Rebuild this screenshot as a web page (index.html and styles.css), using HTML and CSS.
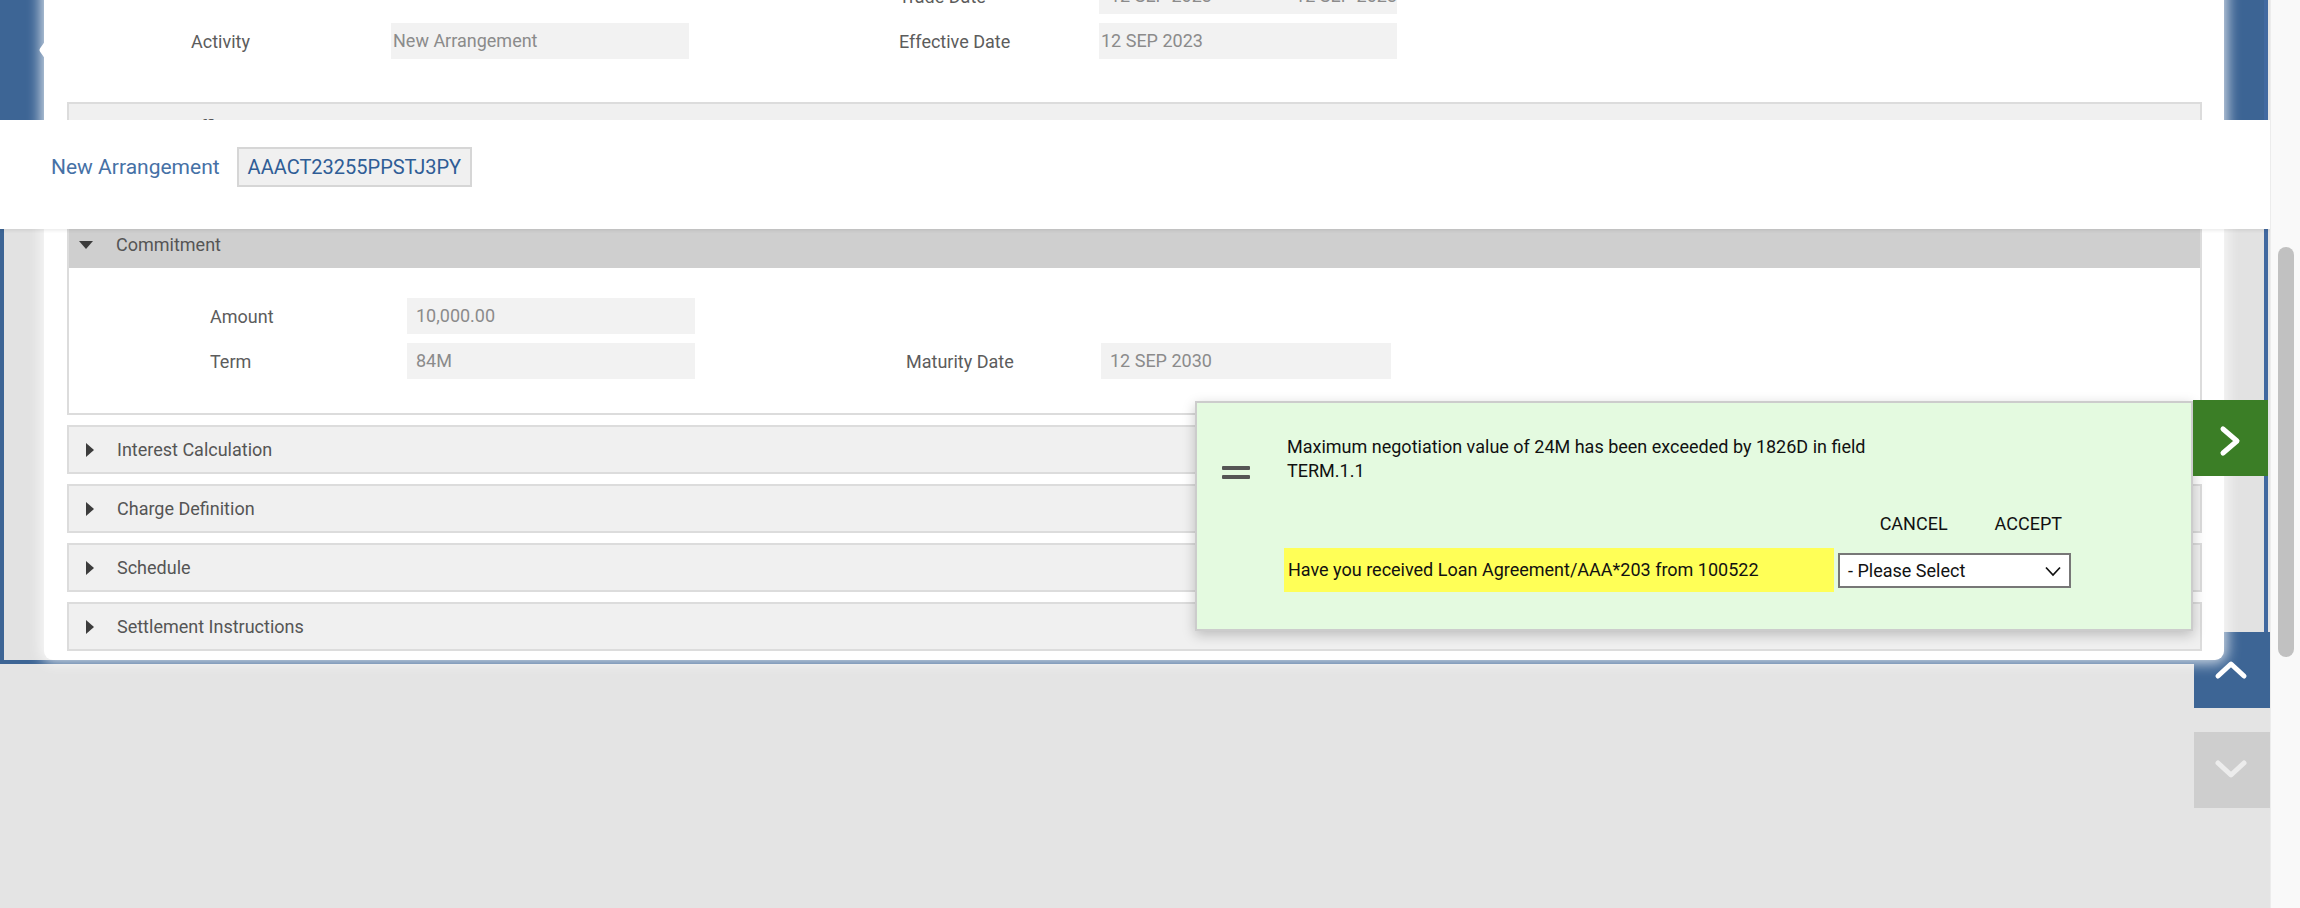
FILE: index.html
```html
<!DOCTYPE html>
<html>
<head>
<meta charset="utf-8">
<title>New Arrangement</title>
<link rel="stylesheet" href="styles.css">
</head>
<body>
<div class="screen">
  <div class="viewport">
    <div class="frame">
      <div class="card">
        <div class="form form-top">
          <span class="label col-4">Trade Date</span>
          <span class="value value-split"><span>12 SEP 2023</span><span>12 SEP 2023</span></span>
          <span class="label">Activity</span>
          <span class="value">New Arrangement</span>
          <span class="label col-4">Effective Date</span>
          <span class="value">12 SEP 2023</span>
        </div>

        <div class="section officer">
          <div class="sec-head"><span class="tri tri-right"></span>Account Officer</div>
        </div>

        <div class="section open">
          <div class="sec-head"><span class="tri tri-down"></span>Commitment</div>
          <div class="form form-commit">
            <span class="label">Amount</span>
            <span class="value">10,000.00</span>
            <span class="label col-1">Term</span>
            <span class="value">84M</span>
            <span class="label col-4">Maturity Date</span>
            <span class="value">12 SEP 2030</span>
          </div>
        </div>

        <div class="section">
          <div class="sec-head"><span class="tri tri-right"></span>Interest Calculation</div>
        </div>
        <div class="section">
          <div class="sec-head"><span class="tri tri-right"></span>Charge Definition</div>
        </div>
        <div class="section">
          <div class="sec-head"><span class="tri tri-right"></span>Schedule</div>
        </div>
        <div class="section last">
          <div class="sec-head"><span class="tri tri-right"></span>Settlement Instructions</div>
        </div>
      </div>
    </div>

    <div class="nav nav-left">
      <svg width="100" height="200" viewBox="0 0 100 200"><path d="M56 40 L42 60 L56 80" fill="none" stroke="#fff" stroke-width="5" stroke-linecap="round" stroke-linejoin="round"/></svg>
    </div>
    <div class="nav nav-right"></div>
    <div class="nav nav-up">
      <svg width="76" height="76" viewBox="0 0 76 76"><path d="M24 44 L37 32 L50 44" fill="none" stroke="#fff" stroke-width="5" stroke-linecap="round" stroke-linejoin="round"/></svg>
    </div>
    <div class="nav nav-down">
      <svg width="76" height="76" viewBox="0 0 76 76"><path d="M24 31 L37 43 L50 31" fill="none" stroke="#ececec" stroke-width="5" stroke-linecap="round" stroke-linejoin="round"/></svg>
    </div>

    <div class="header-bar">
      <span class="header-title">New Arrangement</span>
      <span class="header-id">AAACT23255PPSTJ3PY</span>
    </div>

    <div class="popup">
      <div class="popup-icon"><span></span><span></span></div>
      <div class="popup-body">
        <div class="popup-msg">Maximum negotiation value of 24M has been exceeded by 1826D in field<br>TERM.1.1</div>
        <div class="popup-actions">
          <span class="btn">CANCEL</span>
          <span class="btn">ACCEPT</span>
        </div>
        <div class="popup-question">
          <span class="question">Have you received Loan Agreement/AAA*203 from 100522</span>
          <span class="select">- Please Select
            <svg class="select-arrow" width="16" height="11" viewBox="0 0 16 11"><path d="M1 1.5 L8 9 L15 1.5" fill="none" stroke="#111" stroke-width="1.7"/></svg>
          </span>
        </div>
      </div>
    </div>

    <div class="nav-next">
      <svg width="75" height="76" viewBox="0 0 75 76"><path d="M30 29 L44 41 L30 53" fill="none" stroke="#fff" stroke-width="5" stroke-linecap="round" stroke-linejoin="round"/></svg>
    </div>
  </div>
  <div class="scrollbar"><div class="thumb"></div></div>
</div>
</body>
</html>
```

FILE: styles.css
```css
* { box-sizing: border-box; }

html, body {
  margin: 0;
  padding: 0;
  width: 2300px;
  height: 908px;
  overflow: hidden;
  background: #e4e4e4;
  font-family: Roboto, "Noto Sans", "Liberation Sans", sans-serif;
}

.screen {
  display: flex;
  width: 2300px;
  height: 908px;
}

.viewport {
  position: relative;
  width: 2270px;
  height: 908px;
  overflow: hidden;
  background: #e4e4e4;
}

/* background window */
.frame {
  width: 2268px;
  margin-top: -40px;
  border-left: 4px solid #3d6595;
  border-right: 4px solid #4169a0;
  border-bottom: 4px solid #3d6595;
  padding: 0 40px;
  background: #e2e2e2;
}

.card {
  position: relative;
  z-index: 2;
  background: #ffffff;
  border-radius: 0 0 9px 9px;
  padding: 18px 22px 9px 23px;
  box-shadow: 0 0 14px 3px rgba(255, 255, 255, 0.8);
}

/* forms */
.form {
  display: grid;
  row-gap: 9px;
  align-items: center;
  font-size: 18px;
}

.form-top {
  grid-template-columns: 200px 298px 210px 200px 298px;
  padding-left: 124px;
  margin-bottom: 43px;
}

.form-commit {
  grid-template-columns: 197px 288px 211px 195px 290px;
  padding: 30px 0 34px 141px;
}

.col-1 { grid-column: 1; }
.col-4 { grid-column: 4; }

.label {
  color: #5c5c5c;
  white-space: nowrap;
}

.value {
  height: 36px;
  line-height: 36px;
  background: #f2f2f2;
  color: #8b8b8b;
  padding-left: 2px;
  white-space: nowrap;
  overflow: hidden;
}

.form-commit .value { padding-left: 9px; }

.value-split {
  display: flex;
  justify-content: space-between;
  padding-left: 11px;
}

/* sections */
.section {
  border: 2px solid #dcdcdc;
  background: #f0f0f0;
  margin-bottom: 10px;
}

.section.last { margin-bottom: 0; }

.section.officer { height: 107px; }

.section.open {
  background: #ffffff;
  border-top: none;
}

.sec-head {
  height: 45px;
  display: flex;
  align-items: center;
  font-size: 18px;
  color: #555555;
}

.section.open .sec-head {
  height: 49px;
  background: #cfcfcf;
  border-top: 2px solid #d4d4d4;
}

.tri {
  display: inline-block;
  width: 0;
  height: 0;
  margin-right: 23px;
}

.tri-right {
  margin-left: 17px;
  border-left: 8px solid #3c3c3c;
  border-top: 7px solid transparent;
  border-bottom: 7px solid transparent;
}

.tri-down {
  margin-left: 10px;
  border-top: 8px solid #3c3c3c;
  border-left: 7.5px solid transparent;
  border-right: 7.5px solid transparent;
}

/* floating nav buttons */
.nav {
  position: absolute;
  z-index: 1;
}

.nav svg { display: block; }

.nav-left {
  left: 0;
  top: -10px;
  width: 100px;
  height: 200px;
  background: #3d6595;
}

.nav-left svg { margin-top: 0; }

.nav-right {
  left: 2194px;
  top: -10px;
  width: 70px;
  height: 200px;
  background: #3c6494;
}

.nav-up {
  left: 2194px;
  top: 632px;
  width: 76px;
  height: 76px;
  background: #3d6595;
}

.nav-down {
  left: 2194px;
  top: 732px;
  width: 76px;
  height: 76px;
  background: #cecece;
}

/* sticky header */
.header-bar {
  position: absolute;
  z-index: 5;
  top: 120px;
  left: 0;
  width: 2270px;
  height: 109px;
  background: #ffffff;
  display: flex;
  align-items: center;
  align-content: flex-start;
  padding: 27px 0 42px 51px;
  gap: 17px;
  box-shadow: 0 2px 3px rgba(0, 0, 0, 0.07);
}

.header-title {
  font-size: 21px;
  color: #4671a6;
  white-space: nowrap;
}

.header-id {
  height: 40px;
  line-height: 36px;
  padding: 0 9px;
  border: 2px solid #d6d6d6;
  background: #f0f0f0;
  color: #2f5d96;
  font-size: 20px;
  white-space: nowrap;
}

/* override popup */
.popup {
  position: absolute;
  z-index: 6;
  left: 1195px;
  top: 401px;
  width: 998px;
  height: 230px;
  border: 2px solid #cccccc;
  background: #e4fae0;
  box-shadow: 0 4px 12px rgba(0, 0, 0, 0.22);
  display: grid;
  grid-template-columns: 87px 787px;
  padding: 32px 0 0 0;
  color: #111111;
  font-size: 18px;
}

.popup-icon {
  display: flex;
  flex-direction: column;
  gap: 5px;
  margin: 31px 0 0 25px;
}

.popup-icon span {
  display: block;
  width: 28px;
  height: 4px;
  border-radius: 1px;
  background: #555555;
}

.popup-msg {
  line-height: 24px;
  padding-left: 3px;
}

.popup-actions {
  display: flex;
  justify-content: flex-end;
  gap: 29px;
  margin-top: 26px;
  height: 30px;
}

.btn {
  line-height: 30px;
  padding: 0 9px;
}

.popup-question {
  display: flex;
  align-items: center;
  gap: 4px;
  margin-top: 9px;
  height: 44px;
}

.question {
  width: 550px;
  height: 44px;
  line-height: 44px;
  padding-left: 4px;
  background: #ffff57;
  white-space: nowrap;
}

.select {
  position: relative;
  width: 233px;
  height: 35px;
  line-height: 31px;
  border: 2px solid #777777;
  background: #ffffff;
  padding-left: 8px;
  white-space: nowrap;
}

.select-arrow {
  position: absolute;
  right: 8px;
  top: 11px;
}

.nav-next {
  position: absolute;
  z-index: 7;
  left: 2193px;
  top: 400px;
  width: 75px;
  height: 76px;
  background: #3b7e26;
}

.nav-next svg { display: block; }

/* fake scrollbar */
.scrollbar {
  width: 30px;
  height: 908px;
  background: #f9f9f9;
  border-left: 1px solid #ececec;
}

.thumb {
  width: 16px;
  height: 410px;
  margin: 247px 0 0 7px;
  border-radius: 8px;
  background: #c1c1c1;
}
```
